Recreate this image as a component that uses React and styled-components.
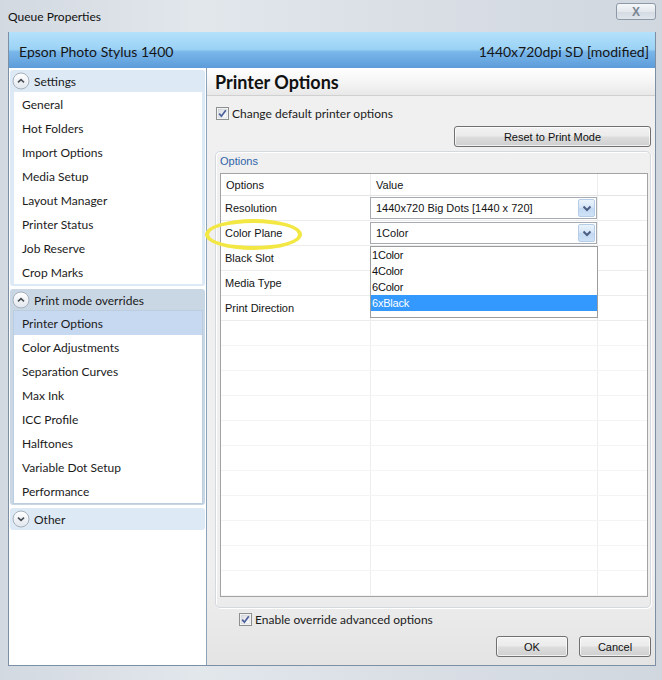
import React from 'react';
import styled, { createGlobalStyle } from 'styled-components';

const Global = createGlobalStyle`
  html, body { margin: 0; padding: 0; }
  body { width: 662px; height: 680px; overflow: hidden; font-family: Lato, "Noto Sans", sans-serif; }
  * { box-sizing: border-box; }
`;

const UI = `Lato, "Noto Sans", sans-serif`;
const WF = `"Liberation Sans", Arial, sans-serif`;

const Page = styled.div`
  position: relative;
  width: 662px;
  height: 680px;
  overflow: hidden;
  display: flex;
  flex-direction: column;
  background: linear-gradient(90deg, #d2d9e0, #e2e7ec 30%, #d9dfe5 60%, #d0d7de);
`;

const TitleBar = styled.div`
  height: 32px;
  flex: none;
  display: flex;
  justify-content: space-between;
  align-items: flex-start;
  padding: 0 6px 0 8px;
`;

const TitleText = styled.span`
  font-family: ${UI};
  font-size: 12px;
  color: #111;
  margin-top: 9px;
`;

const CloseButton = styled.div`
  margin-top: 3px;
  width: 40px;
  height: 17px;
  border: 1px solid #8d99a6;
  border-radius: 3px;
  background: linear-gradient(#f6f8fa, #e3e8ed 50%, #d3dae2 51%, #dfe5eb);
  display: flex;
  align-items: center;
  justify-content: center;
  font-family: ${WF};
  font-weight: bold;
  font-size: 12px;
  color: #7a8592;
`;

const Client = styled.div`
  height: 634px;
  flex: none;
  margin: 0 6px 0 8px;
  display: flex;
  flex-direction: column;
  border: 1px solid #7d8fa3;
  border-top: none;
  background: #fff;
`;

const Header = styled.div`
  height: 36px;
  flex: none;
  display: flex;
  align-items: center;
  justify-content: space-between;
  padding: 2px 6px 0 10px;
  background: linear-gradient(#b4e1fb, #9bd2f5 48%, #78b6ea 55%, #5e9cda);
  font-family: ${UI};
  font-size: 14px;
  color: #151515;
`;

const Body = styled.div`
  flex: 1;
  display: flex;
  min-height: 0;
`;

const Sidebar = styled.div`
  width: 198px;
  flex: none;
  background: #fff;
  border-right: 1px solid #8da3ba;
  padding: 2px 1px 0 1px;
  display: flex;
  flex-direction: column;
  gap: 3px;
`;

const Section = styled.div`
  background: ${p => (p.$active ? '#c9d7e5' : '#dde9f5')};
  border-radius: 3px;
  padding: 0 3px ${p => (p.$open ? '2px' : '0')} 4px;
`;

const SectionHeader = styled.div`
  height: 22px;
  display: flex;
  align-items: center;
  gap: 4px;
  margin-left: -2px;
  font-family: ${UI};
  font-size: 12px;
  color: #1a1a1a;
`;

const ItemList = styled.div`
  background: #fff;
  box-shadow: ${p => (p.$bordered ? '0 0 0 1px #bccde0' : 'none')};
`;

const Item = styled.div`
  height: 24px;
  display: flex;
  align-items: center;
  padding-left: 8px;
  font-family: ${UI};
  font-size: 12px;
  color: #1b1b1b;
  background: ${p => (p.$selected ? '#c7d9f0' : 'transparent')};
`;

const Main = styled.div`
  flex: 1;
  display: flex;
  flex-direction: column;
  background: linear-gradient(#f0f0f0, #efefef 85%, #e4e4e4);
  padding-right: 4px;
`;

const MainHeader = styled.div`
  height: 28px;
  flex: none;
  margin-right: -4px;
  display: flex;
  align-items: center;
  padding-left: 8px;
  background: linear-gradient(#ffffff, #f3f3f3 60%, #e8e8e8);
  border-bottom: 1px solid #d0d0d0;
  font-family: ${UI};
  font-weight: bold;
  font-size: 18px;
  color: #111;
`;

const CheckRow = styled.label`
  display: flex;
  align-items: center;
  gap: 3px;
  height: 13px;
  margin: ${p => p.$m};
  font-family: ${UI};
  font-size: 12px;
  color: #1b1b1b;
`;

const WinButton = styled.div`
  width: ${p => p.$w}px;
  height: 21px;
  border: 1px solid #707070;
  border-radius: 3px;
  background: linear-gradient(#f2f2f2, #ebebeb 48%, #dddddd 52%, #cfcfcf);
  box-shadow: inset 0 0 0 1px rgba(255,255,255,0.7);
  display: flex;
  align-items: center;
  justify-content: center;
  font-family: ${WF};
  font-size: 11px;
  color: #111;
`;

const ResetRow = styled.div`
  display: flex;
  justify-content: flex-end;
  margin-top: 6px;
`;

const Group = styled.div`
  height: 457px;
  flex: none;
  margin: 4px 0 0 8px;
  border: 1px solid #d5d9dd;
  border-radius: 5px;
  box-shadow: inset 1px 1px 0 #fff, 1px 1px 0 #fff;
  display: flex;
  flex-direction: column;
  padding: 0 2px 0 4px;
`;

const GroupLabel = styled.div`
  height: 21px;
  padding: 3px 0 0 0;
  font-family: ${WF};
  font-size: 11px;
  line-height: 13px;
  color: #2f64a8;
`;

const Table = styled.div`
  height: 424px;
  border: 1px solid #a3a3a3;
  background: #fff;
  overflow: hidden;
  display: flex;
  flex-direction: column;
`;

const Row = styled.div`
  display: grid;
  grid-template-columns: 150px 227px 1fr;
  height: ${p => (p.$head ? 22 : 25)}px;
  flex: none;
  border-bottom: 1px solid ${p => (p.$head ? '#e4e4e4' : p.$faint ? '#f4f4f4' : '#ececec')};
`;

const Cell = styled.div`
  position: relative;
  display: flex;
  align-items: center;
  padding-left: ${p => (p.$value ? 0 : 4)}px;
  border-right: 1px solid ${p => (p.$last ? 'transparent' : '#ededed')};
  font-family: ${WF};
  font-size: 11px;
  color: #141414;
  ${p => p.$headText && `padding-left: 5px;`}
`;

const Select = styled.div`
  width: 227px;
  height: 22px;
  margin-left: -1px;
  border: 1px solid #a6aab2;
  background: #fff;
  display: flex;
  align-items: center;
  justify-content: space-between;
  padding: 0 1px 0 5px;
  font-family: ${WF};
  font-size: 11px;
  color: #141414;
`;

const Arrow = styled.div`
  width: 17px;
  height: 18px;
  border: 1px solid #b6cde8;
  border-radius: 2px;
  background: linear-gradient(#eaf3fc, #d3e4f7 50%, #c2d9f3 51%, #cfe2f7);
  display: flex;
  align-items: center;
  justify-content: center;
`;

const DropList = styled.div`
  position: absolute;
  left: -1px;
  top: 25px;
  width: 228px;
  height: 72px;
  border: 1px solid #9d9d9d;
  background: #fff;
  z-index: 3;
`;

const DropItem = styled.div`
  height: 16px;
  display: flex;
  align-items: center;
  padding-left: 1px;
  font-family: ${WF};
  font-size: 11px;
  letter-spacing: -0.2px;
  color: ${p => (p.$sel ? '#fff' : '#111')};
  background: ${p => (p.$sel ? '#3399ff' : 'transparent')};
`;

const ButtonRow = styled.div`
  display: flex;
  justify-content: flex-end;
  gap: 11px;
  margin-top: 10px;
`;

const Highlight = styled.div`
  position: absolute;
  left: 205px;
  top: 219px;
  width: 97px;
  height: 31px;
  border: 4px solid #f3e744;
  border-radius: 50%;
  pointer-events: none;
  z-index: 5;
`;

const CheckBox = () => (
  <svg width="13" height="13" viewBox="0 0 13 13">
    <defs>
      <linearGradient id="cbg" x1="0" y1="0" x2="1" y2="1">
        <stop offset="0" stopColor="#d6d9de" />
        <stop offset="1" stopColor="#ffffff" />
      </linearGradient>
    </defs>
    <rect x="0.5" y="0.5" width="12" height="12" fill="#fff" stroke="#8e8f8f" />
    <rect x="2" y="2" width="9" height="9" fill="url(#cbg)" stroke="#c3c7cc" strokeWidth="0.5" />
    <path d="M3.2 6.6 L5.4 9.2 L9.8 3.2" fill="none" stroke="#4a5f9c" strokeWidth="1.7" />
  </svg>
);

const Circle = ({ down }) => (
  <svg width="18" height="18" viewBox="0 0 18 18">
    <defs>
      <linearGradient id={down ? 'cd' : 'cu'} x1="0" y1="0" x2="0" y2="1">
        <stop offset="0" stopColor="#ffffff" />
        <stop offset="1" stopColor="#e1e7ee" />
      </linearGradient>
    </defs>
    <circle cx="9" cy="9" r="8" fill={`url(#${down ? 'cd' : 'cu'})`} stroke="#a5b0bd" />
    <path d={down ? 'M6 7.6 L9 10.4 L12 7.6' : 'M6 10.4 L9 7.6 L12 10.4'} fill="none" stroke="#4a4f57" strokeWidth="1.6" />
  </svg>
);

const Chevron = () => (
  <svg width="10" height="7" viewBox="0 0 10 7">
    <path d="M1.5 1.5 L5 5 L8.5 1.5" fill="none" stroke="#4d5f82" strokeWidth="2" />
  </svg>
);

const settings = ['General', 'Hot Folders', 'Import Options', 'Media Setup', 'Layout Manager', 'Printer Status', 'Job Reserve', 'Crop Marks'];
const overrides = ['Printer Options', 'Color Adjustments', 'Separation Curves', 'Max Ink', 'ICC Profile', 'Halftones', 'Variable Dot Setup', 'Performance'];

export default function App() {
  return (
    <Page>
      <Global />
      <TitleBar>
        <TitleText>Queue Properties</TitleText>
        <CloseButton>X</CloseButton>
      </TitleBar>
      <Client>
        <Header>
          <span>Epson Photo Stylus 1400</span>
          <span>1440x720dpi SD [modified]</span>
        </Header>
        <Body>
          <Sidebar>
            <Section $open>
              <SectionHeader><Circle /> Settings</SectionHeader>
              <ItemList>
                {settings.map(s => <Item key={s}>{s}</Item>)}
              </ItemList>
            </Section>
            <Section $open $active>
              <SectionHeader><Circle /> Print mode overrides</SectionHeader>
              <ItemList $bordered>
                {overrides.map((s, i) => <Item key={s} $selected={i === 0}>{s}</Item>)}
              </ItemList>
            </Section>
            <Section>
              <SectionHeader><Circle down /> Other</SectionHeader>
            </Section>
          </Sidebar>
          <Main>
            <MainHeader>Printer Options</MainHeader>
            <CheckRow $m="11px 0 0 9px"><CheckBox />Change default printer options</CheckRow>
            <ResetRow><WinButton $w={197}>Reset to Print Mode</WinButton></ResetRow>
            <Group>
              <GroupLabel>Options</GroupLabel>
              <Table>
                <Row $head>
                  <Cell $headText>Options</Cell>
                  <Cell $headText>Value</Cell>
                  <Cell $last />
                </Row>
                <Row>
                  <Cell>Resolution</Cell>
                  <Cell $value><Select>1440x720 Big Dots [1440 x 720]<Arrow><Chevron /></Arrow></Select></Cell>
                  <Cell $last />
                </Row>
                <Row>
                  <Cell>Color Plane</Cell>
                  <Cell $value>
                    <Select>1Color<Arrow><Chevron /></Arrow></Select>
                    <DropList>
                      <DropItem>1Color</DropItem>
                      <DropItem>4Color</DropItem>
                      <DropItem>6Color</DropItem>
                      <DropItem $sel>6xBlack</DropItem>
                    </DropList>
                  </Cell>
                  <Cell $last />
                </Row>
                <Row>
                  <Cell>Black Slot</Cell>
                  <Cell $value />
                  <Cell $last />
                </Row>
                <Row>
                  <Cell>Media Type</Cell>
                  <Cell $value />
                  <Cell $last />
                </Row>
                <Row>
                  <Cell>Print Direction</Cell>
                  <Cell $value />
                  <Cell $last />
                </Row>
                {Array.from({ length: 12 }).map((_, i) => (
                  <Row key={i} $faint>
                    <Cell />
                    <Cell $value />
                    <Cell $last />
                  </Row>
                ))}
              </Table>
            </Group>
            <CheckRow $m="5px 0 0 32px"><CheckBox />Enable override advanced options</CheckRow>
            <ButtonRow>
              <WinButton $w={72}>OK</WinButton>
              <WinButton $w={72}>Cancel</WinButton>
            </ButtonRow>
          </Main>
        </Body>
      </Client>
      <Highlight />
    </Page>
  );
}
